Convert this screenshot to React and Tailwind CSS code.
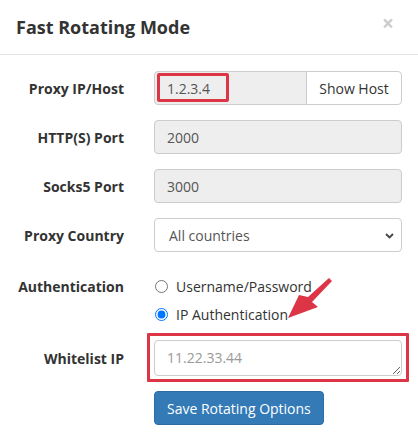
import { useState } from 'react';

function Label({ children }) {
  return (
    <div className="w-[124px] shrink-0 text-right text-[14px] font-bold text-[#333]">{children}</div>
  );
}

export default function App() {
  const [auth, setAuth] = useState('ip');

  return (
    <div className="relative w-[418px] h-[443px] bg-white text-[14px] text-[#333] font-['Open_Sans',sans-serif] overflow-hidden">
      <div className="h-[55px] flex items-center justify-between pl-4 pr-[24px] border-b border-[#e5e5e5]">
        <h4 className="text-[18px] font-bold leading-none text-[#333]">Fast Rotating Mode</h4>
        <button className="-mt-[7px] text-[21px] font-bold leading-none text-black opacity-20">×</button>
      </div>

      <div className="pt-[16px] pr-[16px] flex flex-col">
        <div className="flex items-center gap-[30px] h-[34px]">
          <Label>Proxy IP/Host</Label>
          <div className="flex w-[248px] h-[34px]">
            <div className="relative flex-1 flex items-center px-3 bg-[#eee] border border-[#ccc] rounded-l-[4px] text-[#555]">
              1.2.3.4
              <div className="absolute left-[2px] top-[1px] w-[72px] h-[29px] border-[3px] border-[#dc3545] rounded-[2px]"></div>
            </div>
            <button className="w-[96px] -ml-px bg-white border border-[#ccc] rounded-r-[4px] text-[#333]">Show Host</button>
          </div>
        </div>

        <div className="flex items-center gap-[30px] h-[34px] mt-[15px]">
          <Label>HTTP(S) Port</Label>
          <div className="w-[248px] h-[34px] flex items-center px-3 bg-[#eee] border border-[#ccc] rounded-[4px] text-[#555]">2000</div>
        </div>

        <div className="flex items-center gap-[30px] h-[34px] mt-[15px]">
          <Label>Socks5 Port</Label>
          <div className="w-[248px] h-[34px] flex items-center px-3 bg-[#eee] border border-[#ccc] rounded-[4px] text-[#555]">3000</div>
        </div>

        <div className="flex items-center gap-[30px] h-[34px] mt-[15px]">
          <Label>Proxy Country</Label>
          <div className="relative w-[248px] h-[34px] flex items-center pl-[14px] bg-white border border-[#ccc] rounded-[4px] text-[#555]">
            All countries
            <svg className="absolute right-[7px] top-[14px]" width="9" height="6" viewBox="0 0 9 6">
              <path d="M1 1l3.5 3.5L8 1" fill="none" stroke="#444" strokeWidth="1.8" />
            </svg>
          </div>
        </div>

        <div className="flex gap-[30px] mt-[20px]">
          <div className="w-[124px] shrink-0 h-[28px] flex items-center justify-end text-[14px] font-bold text-[#333]">Authentication</div>
          <div className="flex flex-col">
            <label className="h-[28px] flex items-center gap-[8px] pl-[1px] text-[#333]">
              <input type="radio" name="auth" checked={auth === 'user'} onChange={() => setAuth('user')} className="m-0 w-[13px] h-[13px]" />
              Username/Password
            </label>
            <label className="h-[28px] flex items-center gap-[8px] pl-[1px] text-[#333]">
              <input type="radio" name="auth" checked={auth === 'ip'} onChange={() => setAuth('ip')} className="m-0 w-[13px] h-[13px]" />
              IP Authentication
            </label>
          </div>
        </div>

        <div className="flex items-center gap-[30px] mt-[12px]">
          <Label>Whitelist IP</Label>
          <div className="relative">
            <textarea
              rows={1}
              placeholder="11.22.33.44"
              className="block w-[248px] h-[36px] px-3 py-[6px] leading-[22px] border border-[#ccc] rounded-[4px] text-[#555] placeholder:text-[#999] outline-none resize-y"
            ></textarea>
            <div className="absolute -left-[7px] -right-[7px] -top-[7px] -bottom-[6px] border-[3px] border-[#dc3545] rounded-[1px] pointer-events-none"></div>
          </div>
        </div>

        <div className="flex gap-[30px] mt-[15px]">
          <div className="w-[124px] shrink-0"></div>
          <button className="h-[34px] px-3 bg-[#337ab7] border border-[#2e6da4] rounded-[4px] text-white">Save Rotating Options</button>
        </div>
      </div>

      <svg className="absolute left-0 top-0 pointer-events-none" width="418" height="443">
        <polygon
          points="329,278 332,281 312,302 318,307 288,318 299,295 308,297"
          fill="#dc3545"
        />
      </svg>
    </div>
  );
}
